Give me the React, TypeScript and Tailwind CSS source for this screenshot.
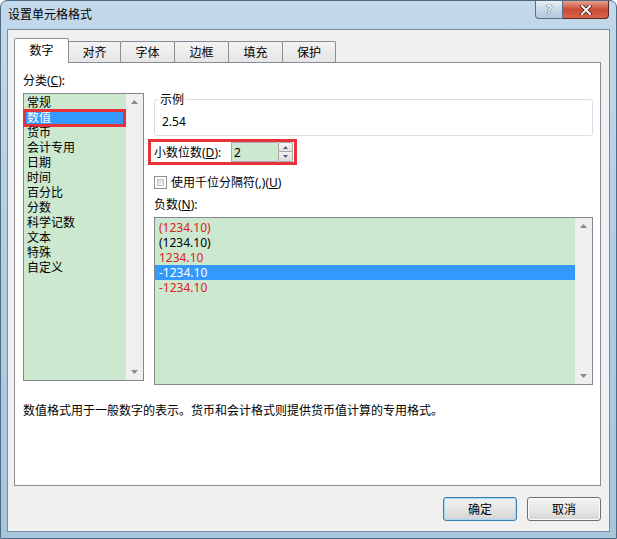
import React from 'react';

const categories = ['常规', '数值', '货币', '会计专用', '日期', '时间', '百分比', '分数', '科学记数', '文本', '特殊', '自定义'];

const negatives = [
  { text: '(1234.10)', red: true },
  { text: '(1234.10)', red: false },
  { text: '1234.10', red: true },
  { text: '-1234.10', red: false, selected: true },
  { text: '-1234.10', red: true },
];

const tabs = [
  { label: '对齐', w: 'w-[53px]' },
  { label: '字体', w: 'w-[55px]' },
  { label: '边框', w: 'w-[55px]' },
  { label: '填充', w: 'w-[55px]' },
  { label: '保护', w: 'w-[54px]' },
];

function ScrollTrack() {
  return (
    <div className="w-[17px] self-stretch bg-[#efefef] flex flex-col justify-between items-center pt-[6px] pb-[6px]">
      <svg width="7" height="4" viewBox="0 0 7 4">
        <path d="M0 4 L3.5 0 L7 4 Z" fill="#8a8a8a" />
      </svg>
      <svg width="7" height="4" viewBox="0 0 7 4">
        <path d="M0 0 L3.5 4 L7 0 Z" fill="#8a8a8a" />
      </svg>
    </div>
  );
}

function Spinner() {
  return (
    <div className="w-[15px] h-[20px] flex flex-col">
      <div className="h-[10px] border border-[#a7a9ac] rounded-t-[2px] bg-gradient-to-b from-[#f7f7f7] to-[#e2e2e2] flex items-center justify-center">
        <svg width="5" height="3" viewBox="0 0 5 3">
          <path d="M0 3 L2.5 0 L5 3 Z" fill="#4d6185" />
        </svg>
      </div>
      <div className="h-[10px] border border-t-0 border-[#a7a9ac] rounded-b-[2px] bg-gradient-to-b from-[#f2f2f2] to-[#dcdcdc] flex items-center justify-center">
        <svg width="5" height="3" viewBox="0 0 5 3">
          <path d="M0 0 L2.5 3 L5 0 Z" fill="#4d6185" />
        </svg>
      </div>
    </div>
  );
}

export default function App() {
  return (
    <div className="w-[617px] h-[539px] flex flex-col border border-[#4f6b84] rounded-t-[7px] bg-gradient-to-b from-[#c3d9ea] via-[#b1cde2] to-[#a6c6dc] font-['Noto_Sans','Noto_Sans_CJK_SC',sans-serif] text-[12px] leading-[15px] text-black overflow-hidden">
      {/* title bar */}
      <div className="h-[28px] flex items-start justify-between pl-[7px] pr-[7px]">
        <div className="pt-[6px] text-[12px] leading-[16px] text-black">设置单元格格式</div>
        <div className="flex">
          <div className="w-[28px] h-[18px] border border-[#5a7089] border-t-0 rounded-bl-[4px] bg-gradient-to-b from-[#e6eff7] via-[#c9d9e8] to-[#b3c8dc] flex items-center justify-center">
            <span className="text-[12px] leading-[14px] font-bold text-white [text-shadow:0_0_1px_#2c3e50,0_0_1px_#2c3e50]">?</span>
          </div>
          <div className="w-[46px] h-[18px] border border-l-0 border-t-0 border-[#5a2a22] rounded-br-[4px] bg-gradient-to-b from-[#e8a08e] via-[#c94a35] to-[#d7634a] flex items-center justify-center">
            <svg width="12" height="10" viewBox="0 0 12 10">
              <path d="M2 1 L10 9 M10 1 L2 9" stroke="#3a1810" strokeWidth="3.4" strokeLinecap="square" />
              <path d="M2 1 L10 9 M10 1 L2 9" stroke="#ffffff" strokeWidth="2" strokeLinecap="square" />
            </svg>
          </div>
        </div>
      </div>

      {/* client area */}
      <div className="mx-[6px] h-[503px] border border-[#7b8ea0] bg-[#f0f0f0] pl-[6px] pt-[8px]">
        {/* tabs */}
        <div className="h-[24px] flex items-end">
          <div className="w-[55px] h-[25px] mb-[-1px] relative z-10 border border-b-0 border-[#898c95] rounded-t-[2px] bg-white flex items-center justify-center pb-[2px]">
            数字
          </div>
          {tabs.map((t) => (
            <div
              key={t.label}
              className={`${t.w} h-[21px] -ml-px border border-b-0 border-[#898c95] rounded-t-[2px] bg-gradient-to-b from-[#f3f3f3] to-[#e5e5e5] flex items-center justify-center`}
            >
              {t.label}
            </div>
          ))}
        </div>

        {/* panel */}
        <div className="w-[587px] h-[424px] border border-[#898c95] bg-white pl-[8px] pt-[10px] pr-[7px]">
          <div className="flex items-start gap-[10px]">
            {/* left column */}
            <div className="w-[121px] flex flex-col">
              <div className="h-[15px] mb-[5px]">
                分类(<span className="underline">C</span>):
              </div>
              <div className="h-[288px] border border-[#828790] flex">
                <div className="flex-1 bg-[#cce8cf] pt-[1px]">
                  {categories.map((c) => {
                    const sel = c === '数值';
                    return (
                      <div
                        key={c}
                        className={`relative h-[15px] pl-[3px] ${sel ? 'bg-[#3399ff] text-white' : ''}`}
                      >
                        {c}
                        {sel && (
                          <span className="absolute -left-[1px] -top-[1px] right-[0px] -bottom-[2px] border-[3px] border-[#e8323a]" />
                        )}
                      </div>
                    );
                  })}
                </div>
                <ScrollTrack />
              </div>
            </div>

            {/* right column */}
            <div className="w-[439px] flex flex-col">
              <div className="relative mt-[26px] h-[37px] border border-[#d5dfe5] rounded-[3px] pl-[7px] pt-[14px]">
                <span className="absolute left-[4px] -top-[8px] bg-white px-[1px]">示例</span>
                2.54
              </div>

              <div className="mt-[3px] -ml-[6px] w-[149px] h-[26px] border-[3px] border-[#e8323a] flex items-center pl-[3px]">
                <div className="w-[77px]">
                  小数位数(<span className="underline">D</span>):
                </div>
                <div className="w-[47px] h-[20px] border border-r-0 border-[#abadb3] bg-[#cce8cf] pl-[2px] flex items-center">
                  2
                </div>
                <Spinner />
              </div>

              <div className="mt-[11px] h-[13px] flex items-center">
                <div className="w-[13px] h-[13px] border border-[#8e8f8f] bg-white p-[2px]">
                  <div className="w-full h-full border border-[#c3c3c3] bg-gradient-to-br from-[#dcdcdc] to-[#f6f6f6]" />
                </div>
                <span className="ml-[4px]">
                  使用千位分隔符(,)(<span className="underline">U</span>)
                </span>
              </div>

              <div className="mt-[8px] h-[15px] mb-[5px]">
                负数(<span className="underline">N</span>):
              </div>
              <div className="h-[168px] border border-[#828790] flex">
                <div className="flex-1 bg-[#cce8cf] pt-[2px]">
                  {negatives.map((n, i) => (
                    <div
                      key={i}
                      className={`h-[15px] pl-[4px] ${n.selected ? 'bg-[#3399ff] text-white' : n.red ? 'text-[#e0201f]' : 'text-black'}`}
                    >
                      {n.text}
                    </div>
                  ))}
                </div>
                <ScrollTrack />
              </div>
            </div>
          </div>

          <div className="mt-[18px]">数值格式用于一般数字的表示。货币和会计格式则提供货币值计算的专用格式。</div>
        </div>

        {/* buttons */}
        <div className="w-[587px] mt-[11px] flex justify-end gap-[10px]">
          <div className="w-[74px] h-[24px] rounded-[3px] border border-[#3c7fb1] bg-gradient-to-b from-[#f2f2f2] via-[#e6e6e6] to-[#d4d4d4] shadow-[inset_0_0_0_1px_#a6d7f4] flex items-center justify-center">
            确定
          </div>
          <div className="w-[74px] h-[24px] rounded-[3px] border border-[#707070] bg-gradient-to-b from-[#f2f2f2] via-[#e9e9e9] to-[#d6d6d6] shadow-[inset_0_0_0_1px_#fbfbfb] flex items-center justify-center">
            取消
          </div>
        </div>
      </div>
    </div>
  );
}
